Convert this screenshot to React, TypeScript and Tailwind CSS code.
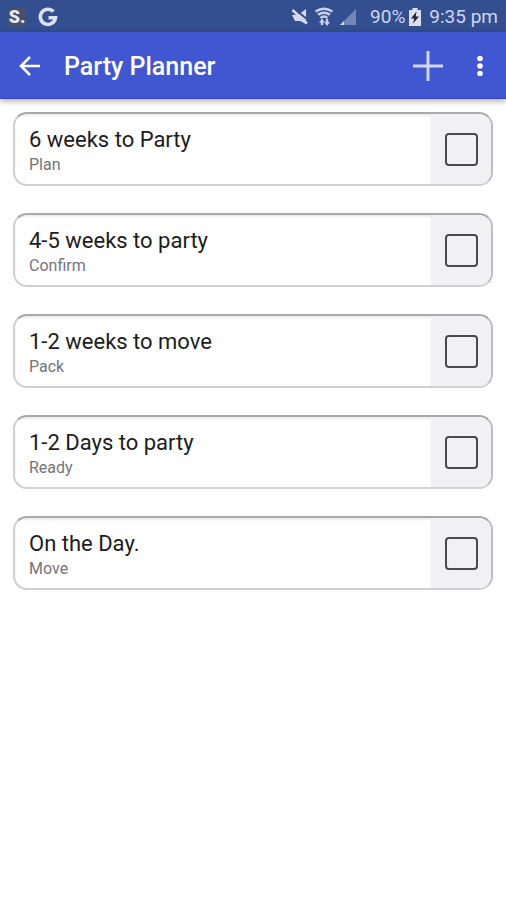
import { useState } from 'react'

const tasks = [
  { id: 'six-weeks', title: '6 weeks to Party', note: 'Plan' },
  { id: 'four-weeks', title: '4-5 weeks to party', note: 'Confirm' },
  { id: 'one-week', title: '1-2 weeks to move', note: 'Pack' },
  { id: 'one-day', title: '1-2 Days to party', note: 'Ready' },
  { id: 'on-the-day', title: 'On the Day.', note: 'Move' },
]

const StatusBar = () => (
  <div className="flex h-8 items-center justify-between bg-[#344f8f] px-2 pt-[2px] text-[#cdd6ee]">
    <div className="flex items-center gap-3">
      <span className="flex h-[18px] w-[18px] items-center justify-center rounded-xs bg-[#46506b] text-lg leading-none font-black text-[#e6e9f2]">
        S.
      </span>
      <svg className="h-5 w-5" viewBox="0 0 20 20" fill="none" stroke="#d9e2f5" strokeWidth="3.600">
        <path d="M15.500 4.600A7.600 7.600 0 1 0 17.500 10.800H10.500" />
      </svg>
    </div>

    <div className="flex items-center">
      {/* Muted speaker */}
      <svg className="h-5 w-5" viewBox="0 0 20 20">
        <path d="M2 8h6l8-6v15l-6-3H5z" fill="#d3daee" />
        <path d="M4.500 2 18 13" stroke="#344f8f" strokeWidth="2" />
        <path d="M2.500 3 17 16.500" stroke="#d3daee" strokeWidth="2.600" />
      </svg>
      {/* Wi-Fi with traffic arrows */}
      <svg className="ml-1 h-5 w-5" viewBox="0 0 20 20" fill="none" stroke="#c6d0ea" strokeWidth="2.400">
        <path d="M1.500 4.500Q10-1 18.500 4.500M4 7.800Q10 3.500 16 7.800M6.500 11Q10 8 13.500 11" />
        <path d="M8 18v-4M13 12v4" />
        <path d="M5 15.500l3-4 3 4zM10 15l3 4 3-4z" fill="#c6d0ea" stroke="none" />
      </svg>
      {/* Signal strength */}
      <svg className="ml-1 h-5 w-5" viewBox="0 0 20 20">
        <path d="M2 18 18 2v16z" fill="#7287b8" />
        <path d="M2 18 6 14v4z" fill="#d3daee" />
      </svg>
      <span className="ml-3 text-[19px] leading-[30px]">90%</span>
      <svg className="ml-1 h-[18px] w-3" viewBox="0 0 12 18">
        <path d="M0 2h3.500V0h5v2H12v16H0z" fill="#d9e0f0" />
        <path d="M7.500 3.500 2 10.500h3.300L4 15.500l6-7H6.700z" fill="#1d2233" />
      </svg>
      <span className="ml-2 text-[19px] leading-[30px]">9:35 pm</span>
    </div>
  </div>
)

const AppBar = () => (
  <header className="flex h-[67px] items-center border-b border-[#3149b4] bg-[#4156d1] pt-[2px] pr-2 pl-3 text-white shadow-[0_2px_6px_rgba(0,0,0,0.35)]">
    <button type="button" aria-label="Back" className="flex h-9 w-9 items-center justify-center">
      <svg className="h-6 w-6" viewBox="0 0 24 24" fill="none" stroke="currentColor" strokeWidth="2.600">
        <path d="M22 12H4M12 3 3 12l9 9" />
      </svg>
    </button>
    <h1 className="ml-4 grow pt-[2px] text-[25px] leading-8 font-medium">Party Planner</h1>
    <button type="button" aria-label="Add" className="flex h-9 w-9 items-center justify-center">
      <svg className="h-[30px] w-[30px]" viewBox="0 0 30 30" stroke="#cfd6f8" strokeWidth="3">
        <path d="M15 0v30M0 15h30" />
      </svg>
    </button>
    <button type="button" aria-label="More options" className="ml-4 flex h-9 w-9 items-center justify-center">
      <svg className="h-6 w-6" viewBox="0 0 24 24" fill="currentColor">
        <circle cx="12" cy="4.500" r="2.800" />
        <circle cx="12" cy="12" r="2.800" />
        <circle cx="12" cy="19.500" r="2.800" />
      </svg>
    </button>
  </header>
)

const App = () => {
  const [done, setDone] = useState<string[]>([])

  const toggle = (id: string) => {
    setDone((prev) => (prev.includes(id) ? prev.filter((d) => d !== id) : [...prev, id]))
  }

  return (
    <div className="min-h-screen bg-white font-['Roboto',sans-serif]">
      <StatusBar />
      <AppBar />
      <ul className="flex flex-col gap-[27px] px-[13px] py-[13px]">
        {tasks.map((task) => (
          <li
            key={task.id}
            className="flex overflow-hidden rounded-[14px] border-2 border-t-[#a9a9a9] border-r-[#bdbdbd] border-b-[#d0d0d0] border-l-[#d0d0d0]"
          >
            <label htmlFor={task.id} className="grow pt-3 pb-2 pl-[14px] shadow-[inset_0_2px_2px_rgba(0,0,0,0.08)]">
              <span className="block text-[22px] leading-7 text-[#1c1c1c]">{task.title}</span>
              <span className="block text-base leading-[22px] text-[#757575]">{task.note}</span>
            </label>
            <div className="flex w-[60px] items-center justify-center bg-[#f1f1f3]">
              <input
                id={task.id}
                type="checkbox"
                checked={done.includes(task.id)}
                onChange={() => toggle(task.id)}
                className="h-[33px] w-[33px] appearance-none rounded-sm border-2 border-[#4a4a4c] checked:bg-[#4156d1]"
              />
            </div>
          </li>
        ))}
      </ul>
    </div>
  )
}

export default App
